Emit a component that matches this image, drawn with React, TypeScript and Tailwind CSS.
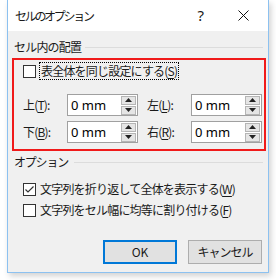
import React from "react";

const F = { fontFamily: '"Noto Sans CJK JP", "Noto Sans", sans-serif' };

function U({ c }: { c: string }) {
  return <span className="underline underline-offset-[2px]">{c}</span>;
}

function Box({ checked }: { checked?: boolean }) {
  return (
    <div className="w-[13px] h-[13px] border border-[#333333] bg-white flex items-center justify-center shrink-0">
      {checked && (
        <svg width="11" height="11" viewBox="0 0 11 11">
          <path d="M1.5 5.5 L4 8 L9.5 2.5" fill="none" stroke="#333" strokeWidth="1.2" />
        </svg>
      )}
    </div>
  );
}

function Spin() {
  return (
    <div className="flex h-[22px] w-[71px] border border-[#a0a0a0] bg-white items-center">
      <span className="pl-[3px] flex-1 text-[13px] text-black leading-none tracking-normal" style={{ fontFamily: '"Noto Sans", sans-serif' }}>0 mm</span>
      <div className="flex flex-col gap-[1px] mr-[1px] w-[15px]">
        <div className="h-[9px] bg-[#e5e5e5] border border-[#b5b5b5] flex items-center justify-center">
          <svg width="7" height="4" viewBox="0 0 7 4"><path d="M3.5 0 L7 4 L0 4Z" fill="#222" /></svg>
        </div>
        <div className="h-[9px] bg-[#e5e5e5] border border-[#b5b5b5] flex items-center justify-center">
          <svg width="7" height="4" viewBox="0 0 7 4"><path d="M0 0 L7 0 L3.5 4Z" fill="#222" /></svg>
        </div>
      </div>
    </div>
  );
}

export default function App() {
  return (
    <div className="w-[276px] h-[280px] bg-white overflow-hidden text-[12px] text-[#1a1a1a] tracking-[-0.8px]" style={F}>
      <div className="ml-[7px] w-[262px] h-[273px] border-x border-b border-[#8cc1f0] bg-[#f0f0f0] flex flex-col shadow-[2px_3px_6px_rgba(0,0,0,0.18)]">
        {/* title bar */}
        <div className="h-[31px] bg-white flex items-center">
          <span className="ml-[7px] text-[12px] tracking-[-2.3px]">セルのオプション</span>
          <span className="ml-auto mr-[34px] text-[15px] tracking-normal" style={{ fontFamily: '"Noto Sans", sans-serif' }}>?</span>
          <svg className="mr-[19px]" width="11" height="11" viewBox="0 0 11 11">
            <path d="M0.5 0.5 L10.5 10.5 M10.5 0.5 L0.5 10.5" stroke="#111" strokeWidth="1" />
          </svg>
        </div>
        {/* group header */}
        <div className="mt-[8px] h-[16px] flex items-center pl-[6px] pr-[5px]">
          <span>セル内の配置</span>
          <div className="flex-1 ml-[4px] h-px bg-[#dcdcdc]" />
        </div>
        {/* red box */}
        <div className="mt-[3px] ml-[4px] w-[254px] h-[93px] border-2 border-[#f01a1a]">
          <div className="mt-[2px] ml-[9px] flex items-center h-[18px]">
            <Box />
            <span className="ml-[3px] h-[18px] px-[1px] flex items-center border border-dotted border-black">
              表全体を同じ設定にする(<U c="S" />)
            </span>
          </div>
          <div className="mt-[14px] ml-[9px] grid grid-cols-[44px_71px_53px_71px] gap-y-[5px] items-center">
            <span>上(<U c="T" />):</span>
            <Spin />
            <span className="pl-[9px]">左(<U c="L" />):</span>
            <Spin />
            <span>下(<U c="B" />):</span>
            <Spin />
            <span className="pl-[9px]">右(<U c="R" />):</span>
            <Spin />
          </div>
        </div>
        {/* options header */}
        <div className="mt-[3px] h-[16px] flex items-center pl-[6px] pr-[5px]">
          <span className="tracking-[-1.2px]">オプション</span>
          <div className="flex-1 ml-[6px] h-px bg-[#dcdcdc]" />
        </div>
        <div className="mt-[12px] ml-[15px] flex items-center h-[14px]">
          <Box checked />
          <span className="ml-[4px]">文字列を折り返して全体を表示する(<U c="W" />)</span>
        </div>
        <div className="mt-[7px] ml-[15px] flex items-center h-[14px]">
          <Box />
          <span className="ml-[4px]">文字列をセル幅に均等に割り付ける(<U c="F" />)</span>
        </div>
        {/* buttons */}
        <div className="mt-[23px] flex justify-end gap-[11px] pr-[6px]">
          <button className="w-[74px] h-[24px] bg-[#e1e1e1] border-2 border-[#0078d7] text-[12px] tracking-normal">OK</button>
          <button className="w-[74px] h-[24px] bg-[#e1e1e1] border border-[#adadad] text-[12px] tracking-[-1px]">キャンセル</button>
        </div>
      </div>
    </div>
  );
}
